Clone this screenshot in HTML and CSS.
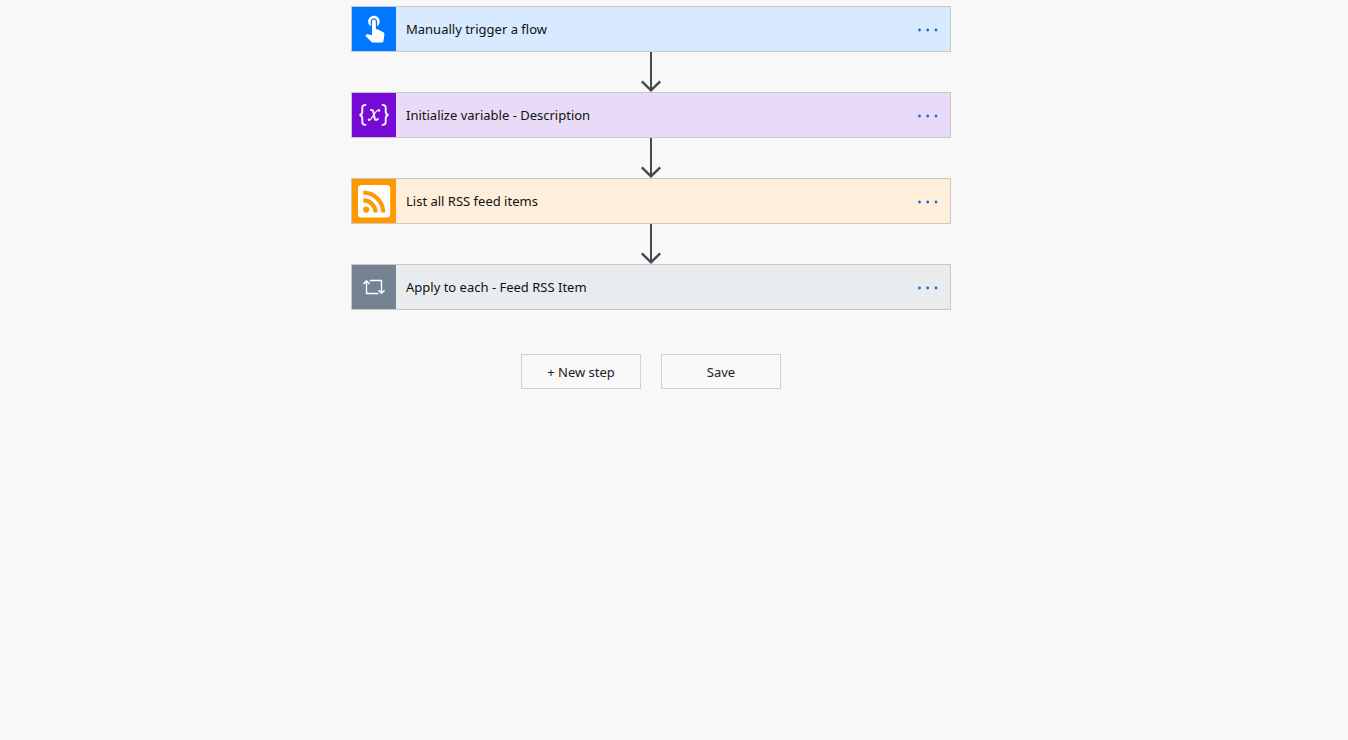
FILE: index.html
```html
<!DOCTYPE html>
<html lang="en">
<head>
<meta charset="utf-8">
<title>Flow designer</title>
<link rel="stylesheet" href="styles.css">
</head>
<body>
<main class="designer">
  <div class="flow">
    <section class="card card-trigger">
      <svg class="card-icon" viewBox="0 0 44 44" aria-hidden="true"><path fill="#fff" transform="translate(7.2 4.9) scale(1.28)" d="M9 11.24V7.5C9 6.12 10.12 5 11.5 5S14 6.12 14 7.5v3.74c1.21-.81 2-2.18 2-3.74C16 5.01 13.99 3 11.5 3S7 5.01 7 7.5c0 1.56.79 2.93 2 3.74zm9.84 4.63l-4.54-2.26c-.17-.07-.35-.11-.54-.11H13v-6c0-.83-.67-1.5-1.5-1.5S10 6.67 10 7.5v10.74l-3.43-.72c-.08-.01-.15-.03-.24-.03-.31 0-.59.13-.79.33l-.79.8 4.94 4.94c.27.27.65.44 1.06.44h6.79c.75 0 1.33-.55 1.44-1.28l.75-5.27c.01-.07.02-.14.02-.2 0-.62-.38-1.16-.91-1.38z"/></svg>
      <span class="card-title">Manually trigger a flow</span>
      <button class="menu" type="button" aria-label="Menu for Manually trigger a flow"><svg viewBox="0 0 22 4" aria-hidden="true"><circle cx="2.500" cy="2" r="1.4"/><circle cx="10.700" cy="2" r="1.4"/><circle cx="19" cy="2" r="1.4"/></svg></button>
    </section>
    <svg class="arrow" viewBox="0 0 22 40" aria-hidden="true"><path d="M11 0V38"/><path class="arrow-head" d="M1.800 29.300L11 38.300L20.200 29.300"/></svg>
    <section class="card card-variable">
      <svg class="card-icon" viewBox="0 0 44 44" aria-hidden="true"><g fill="none" stroke="#f6effc" stroke-linecap="round"><path stroke-width="1.900" d="M13.500 11.900C10.800 11.900 10.300 12.800 10.300 14.500V18.500C10.300 20.700 9.500 21.800 7.500 22C9.500 22.200 10.300 23.300 10.300 25.500V29.300C10.300 31 10.800 31.900 13.500 31.900M30.500 11.900C33.200 11.900 33.700 12.800 33.700 14.500V18.500C33.700 20.700 34.500 21.800 36.500 22C34.500 22.200 33.700 23.300 33.700 25.500V29.300C33.700 31 33.200 31.900 30.500 31.900"/><path stroke-width="2" d="M19 17C20.600 16.600 21.100 17.600 21.500 19.500L22.500 24.700C23 27.200 23.900 27.700 25.900 26"/><path stroke-width="1.300" d="M27.300 17.200C25.300 16.200 23.800 18.500 22 21.500C20 24.800 18.500 27.800 16.700 27"/></g><g fill="#f6effc"><circle cx="27" cy="17.500" r="1.200"/><circle cx="17" cy="26.800" r="1.200"/></g></svg>
      <span class="card-title">Initialize variable - Description</span>
      <button class="menu" type="button" aria-label="Menu for Initialize variable - Description"><svg viewBox="0 0 22 4" aria-hidden="true"><circle cx="2.500" cy="2" r="1.4"/><circle cx="10.700" cy="2" r="1.4"/><circle cx="19" cy="2" r="1.4"/></svg></button>
    </section>
    <svg class="arrow" viewBox="0 0 22 40" aria-hidden="true"><path d="M11 0V38"/><path class="arrow-head" d="M1.800 29.300L11 38.300L20.200 29.300"/></svg>
    <section class="card card-rss">
      <svg class="card-icon" viewBox="0 0 44 44" aria-hidden="true"><rect x="6" y="6" width="32.200" height="32.600" rx="3.500" fill="#fff"/><circle cx="14.200" cy="30.600" r="3.100" fill="#ff9900"/><path fill="none" stroke="#ff9900" stroke-width="4.200" d="M11.300 21.300A12.300 12.300 0 0 1 23.600 33.600M11.300 13.700A19.900 19.900 0 0 1 31.200 33.600"/></svg>
      <span class="card-title">List all RSS feed items</span>
      <button class="menu" type="button" aria-label="Menu for List all RSS feed items"><svg viewBox="0 0 22 4" aria-hidden="true"><circle cx="2.500" cy="2" r="1.4"/><circle cx="10.700" cy="2" r="1.4"/><circle cx="19" cy="2" r="1.4"/></svg></button>
    </section>
    <svg class="arrow" viewBox="0 0 22 40" aria-hidden="true"><path d="M11 0V38"/><path class="arrow-head" d="M1.800 29.300L11 38.300L20.200 29.300"/></svg>
    <section class="card card-loop">
      <svg class="card-icon" viewBox="0 0 44 44" aria-hidden="true"><path fill="none" stroke="#fff" stroke-width="1.400" d="M26.300 28.500H14.500V16M11.400 18.900L14.500 15.800L17.600 18.900M17.800 15.500H29.500V28M26.400 25.200L29.500 28.300L32.600 25.200"/></svg>
      <span class="card-title">Apply to each - Feed RSS Item</span>
      <button class="menu" type="button" aria-label="Menu for Apply to each - Feed RSS Item"><svg viewBox="0 0 22 4" aria-hidden="true"><circle cx="2.500" cy="2" r="1.4"/><circle cx="10.700" cy="2" r="1.4"/><circle cx="19" cy="2" r="1.4"/></svg></button>
    </section>
    <div class="actions">
      <button class="action" type="button">+ New step</button>
      <button class="action" type="button">Save</button>
    </div>
  </div>
</main>
</body>
</html>
```

FILE: styles.css
```css
* {
  box-sizing: border-box;
}

body {
  margin: 0;
  background: #f8f8f8;
  color: #111;
  font-family: "Segoe UI", "Noto Sans", "Open Sans", sans-serif;
  font-size: 13px;
  line-height: 20px;
}

.designer {
  display: flex;
  justify-content: center;
  padding: 6px 46px 24px 0;
}

.flow {
  display: flex;
  flex-direction: column;
  align-items: center;
  width: 100%;
  max-width: 600px;
}

.card {
  display: flex;
  align-items: center;
  width: 100%;
  border: 1px solid #c8c8c8;
}

.card-icon {
  flex: none;
  width: 44px;
  height: 44px;
}

.card-title {
  flex: 1;
  padding: 0 10px;
}

.card-trigger { background: #d7eaff; }
.card-trigger .card-icon { background: #0077ff; }
.card-variable { background: #e9dbf7; }
.card-variable .card-icon { background: #770bd6; }
.card-rss { background: #ffefda; }
.card-rss .card-icon { background: #ff9900; }
.card-loop { background: #e8ecef; }
.card-loop .card-icon { background: #748292; }

.menu {
  display: flex;
  align-items: center;
  justify-content: center;
  width: 44px;
  height: 44px;
  padding: 2px 0 0;
  border: 0;
  background: none;
  cursor: pointer;
}

.menu svg {
  width: 22px;
  height: 4px;
  fill: #0f6fd6;
}

.arrow {
  width: 22px;
  height: 40px;
  fill: none;
  stroke: #484850;
  stroke-width: 2;
}

.arrow-head {
  stroke-width: 2.4;
}

.actions {
  display: flex;
  gap: 20px;
  margin-top: 44px;
}

.action {
  width: 120px;
  height: 35px;
  padding: 0;
  border: 1px solid #d0d0d0;
  background: #f8f8f8;
  color: #222;
  font: inherit;
  cursor: pointer;
}
```
